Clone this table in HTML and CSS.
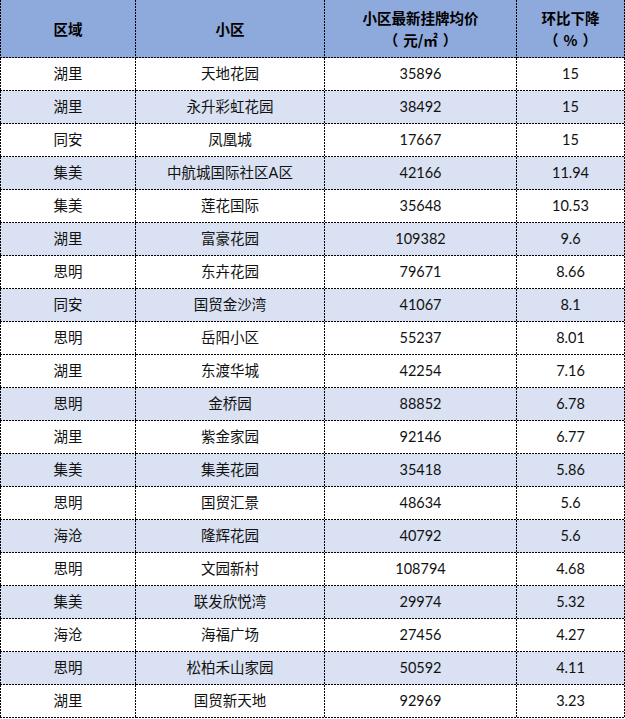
FILE: index.html
```html
<!DOCTYPE html>
<html lang="zh-CN">
<head>
<meta charset="utf-8">
<title>小区挂牌均价</title>
<link rel="stylesheet" href="styles.css">
</head>
<body>
<table class="price-table">
  <colgroup>
    <col class="c1"><col class="c2"><col class="c3"><col class="c4">
  </colgroup>
  <thead>
    <tr>
      <th>区域</th>
      <th>小区</th>
      <th>小区最新挂牌均价<br>（<span class="unit">元/㎡</span>）</th>
      <th>环比下降<br>（<span class="unit">%</span>）</th>
    </tr>
  </thead>
  <tbody>
    <tr><td>湖里</td><td>天地花园</td><td>35896</td><td>15</td></tr>
    <tr class="alt"><td>湖里</td><td>永升彩虹花园</td><td>38492</td><td>15</td></tr>
    <tr><td>同安</td><td>凤凰城</td><td>17667</td><td>15</td></tr>
    <tr class="alt"><td>集美</td><td>中航城国际社区A区</td><td>42166</td><td>11.94</td></tr>
    <tr><td>集美</td><td>莲花国际</td><td>35648</td><td>10.53</td></tr>
    <tr class="alt"><td>湖里</td><td>富豪花园</td><td>109382</td><td>9.6</td></tr>
    <tr><td>思明</td><td>东卉花园</td><td>79671</td><td>8.66</td></tr>
    <tr class="alt"><td>同安</td><td>国贸金沙湾</td><td>41067</td><td>8.1</td></tr>
    <tr><td>思明</td><td>岳阳小区</td><td>55237</td><td>8.01</td></tr>
    <tr><td>湖里</td><td>东渡华城</td><td>42254</td><td>7.16</td></tr>
    <tr class="alt"><td>思明</td><td>金桥园</td><td>88852</td><td>6.78</td></tr>
    <tr><td>湖里</td><td>紫金家园</td><td>92146</td><td>6.77</td></tr>
    <tr class="alt"><td>集美</td><td>集美花园</td><td>35418</td><td>5.86</td></tr>
    <tr><td>思明</td><td>国贸汇景</td><td>48634</td><td>5.6</td></tr>
    <tr class="alt"><td>海沧</td><td>隆辉花园</td><td>40792</td><td>5.6</td></tr>
    <tr><td>思明</td><td>文园新村</td><td>108794</td><td>4.68</td></tr>
    <tr class="alt"><td>集美</td><td>联发欣悦湾</td><td>29974</td><td>5.32</td></tr>
    <tr><td>海沧</td><td>海福广场</td><td>27456</td><td>4.27</td></tr>
    <tr class="alt"><td>思明</td><td>松柏禾山家园</td><td>50592</td><td>4.11</td></tr>
    <tr><td>湖里</td><td>国贸新天地</td><td>92969</td><td>3.23</td></tr>
  </tbody>
</table>
</body>
</html>
```
FILE: styles.css
```css
html, body {
  margin: 0;
  padding: 0;
  background: #ffffff;
}
body {
  font-family: "Lato", "Noto Sans CJK SC", sans-serif;
  font-size: 14.5px;
  color: #111111;
}
.price-table {
  --h-line: repeating-linear-gradient(to right, #000 0 2px, transparent 2px 3px);
  --v-line: repeating-linear-gradient(to bottom, #000 0 2px, transparent 2px 3px);
  --fill: #ffffff;
  border-collapse: separate;
  border-spacing: 0;
  table-layout: fixed;
  width: 625px;
}
.c1 { width: 136px; }
.c2 { width: 189px; }
.c3 { width: 192px; }
.c4 { width: 108px; }
.price-table th,
.price-table td {
  border: 0;
  text-align: center;
  vertical-align: middle;
  padding: 0 1px 1px 0;
  box-sizing: border-box;
  background:
    var(--h-line) left bottom / 100% 1px no-repeat,
    var(--v-line) right top / 1px 100% no-repeat,
    var(--fill);
}
.price-table th:first-child,
.price-table td:first-child {
  padding-left: 1px;
  background:
    var(--h-line) left bottom / 100% 1px no-repeat,
    var(--v-line) right top / 1px 100% no-repeat,
    var(--v-line) left top / 1px 100% no-repeat,
    var(--fill);
}
.price-table thead th {
  --fill: #8ea9db;
  height: 58px;
  font-family: "Noto Sans CJK SC", "Lato", sans-serif;
  font-weight: bold;
  line-height: 22px;
  color: #000000;
}
.unit {
  padding: 0 5px;
}
.price-table td {
  height: 33px;
  line-height: 20px;
}
.price-table tr.alt td {
  --fill: #d9e1f2;
}
```
